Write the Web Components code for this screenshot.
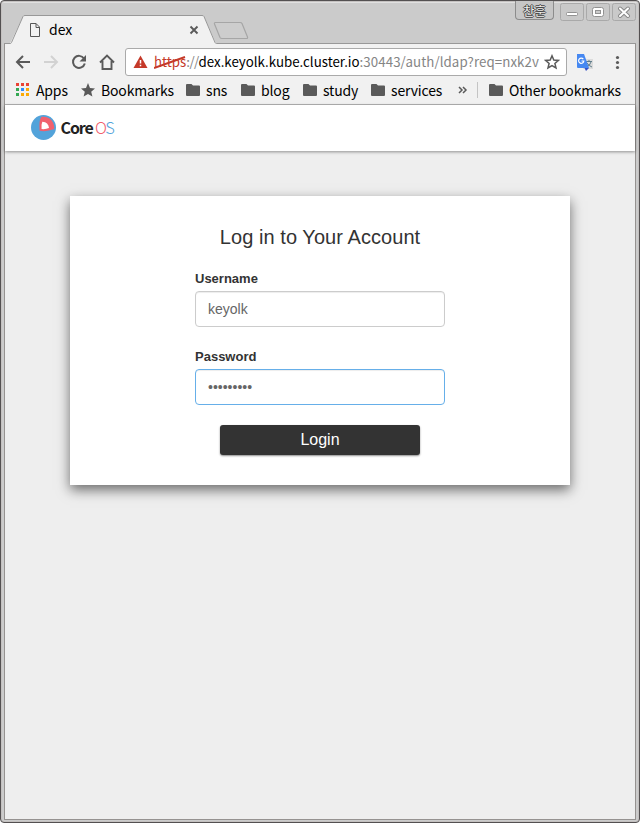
<!DOCTYPE html>
<html lang="en">
<head>
<meta charset="utf-8">
<title>dex</title>
<style>
html,body{margin:0;height:100%;overflow:hidden;background:#fff}
</style>
</head>
<body>
<browser-window>
  <title-bar slot="title">dex</title-bar>
  <nav-bar slot="nav"></nav-bar>
  <bookmark-bar slot="bookmarks"></bookmark-bar>
  <login-page></login-page>
</browser-window>
<script>
const define = (name, html) => customElements.define(name, class extends HTMLElement {
  constructor() {
    super();
    this.attachShadow({mode: 'open'}).innerHTML = '<style>:host,*{box-sizing:border-box}svg{display:block;flex:none}</style>' + html;
  }
});

define('browser-window', `
<style>
:host{display:flex;flex-direction:column;width:640px;height:823px;background:#cbcbcb;border:1px solid #535051;border-radius:4px;box-shadow:inset 0 0 0 1px #c4c1c0,inset 0 2px 0 #e0e0e0;padding:0 3px 2px;font-family:"Noto Sans CJK KR","Noto Sans",sans-serif;color:#000}
.body{flex:1;display:flex;flex-direction:column;border:solid #959290;border-width:0 1px 1px;background:#f1f1f1;min-height:0}
</style>
<slot name="title"></slot>
<div class="body"><slot name="nav"></slot><slot name="bookmarks"></slot><slot></slot></div>`);

define('title-bar', `
<style>
:host{display:block;height:43px;position:relative;flex:none}
.shape{position:absolute;left:0;top:0}
.tab{display:flex;align-items:center;height:28px;width:202px;padding:0 7px 0 25px;position:absolute;top:14px;left:0;font-size:14px}
.label{flex:1;padding-left:8px}
.controls{display:flex;position:absolute;right:0;top:0}
.ime{width:39px;height:19px;border:1px solid #8c8c8c;border-top:0;border-radius:0 0 4px 4px;background:#c6c6c6;font-size:12.500px;line-height:20px;text-align:center;color:#eee;text-shadow:1px 0 #444,-1px 0 #444,0 1px #444,0 -1px #444;margin-right:6px}
</style>
<svg class="shape" width="632" height="43" viewBox="4 1 632 43">
<path d="M4 43.5H10L23 16.500Q23.500 15.500 25 15.500H202Q203.500 15.500 204 16.500L216 43.500H636V44H4Z" fill="#f1f1f1"/>
<path d="M4 43.500H10.500Q11 43.500 11.500 42.500L23 16.500Q23.500 15.500 25 15.500H202Q203.500 15.500 204 16.500L215 42.500Q215.500 43.500 216.500 43.500H636" fill="none" stroke="#989898"/>
<path d="M215.500 22.500H240Q241.500 22.500 242 23.500L247.500 37Q248 38.500 246.500 38.500H222Q220.500 38.500 220 37.500L214.500 24Q214 22.500 215.500 22.500Z" fill="#cdcdcd" stroke="#a6a6a6" stroke-width="1.200"/>
</svg>
<div class="tab"><svg style="margin-top:2px" width="12" height="14" viewBox="0 0 12 14"><path d="M1.500.5H7L10.500 4V13.500H1.500ZM7 .5V4.500H10.500" fill="none" stroke="#555"/></svg><span class="label"><slot></slot></span><svg style="margin-top:2px" width="10" height="10"><path d="M1.500 1.500L8.500 8.500M8.500 1.500L1.500 8.500" stroke="#5a5a5a" stroke-width="1.900"/></svg></div>
<div class="controls"><div class="ime">찬훈</div>
<svg width="76" height="22" viewBox="560 1 76 22">
<g fill="#c9c9c9" stroke="#a9a9a9"><rect x="560.500" y="3.500" width="23" height="17" rx="2"/><rect x="586.500" y="3.500" width="23" height="17" rx="2"/><rect x="612.500" y="3.500" width="23" height="17" rx="2"/></g>
<rect x="566.500" y="12.500" width="11" height="3" rx="1" fill="#fff" stroke="#929292"/>
<rect x="592.500" y="7.500" width="11" height="9" rx="2" fill="#fff" stroke="#929292"/><rect x="595.500" y="10.500" width="5" height="3" fill="#ccc" stroke="#929292"/>
<path d="M620 8.500L628 16M628 8.500L620 16" stroke="#888" stroke-width="4" stroke-linecap="round"/><path d="M620 8.500L628 16M628 8.500L620 16" stroke="#fff" stroke-width="2" stroke-linecap="round"/>
</svg></div>`);

define('nav-bar', `
<style>
:host{display:flex;align-items:center;height:36px;flex:none;padding:0 0 0 10px;background:#f1f1f1}
.icons{display:flex;width:110px;flex:none}
.url{width:442px;height:28px;border:1px solid #aaa;border-radius:3px;background:#fff;display:flex;align-items:center;padding:0 6px 0 7px;flex:none}
.text{width:388px;margin-left:6px;white-space:nowrap;font-size:13.300px;line-height:24px;color:#858585;height:24px}
.bad{color:#c53929;position:relative;display:inline-block}.bad svg{position:absolute;left:0;top:6px}
.slashes{letter-spacing:-.6px}
.host{color:#000}
.path{letter-spacing:.07px}
.star{margin-left:2px}
.tr{margin-left:9px}
</style>
<div class="icons"><svg width="110" height="36" viewBox="15 44 110 36" fill="none" stroke="#5a5a5a" stroke-width="2">
<path d="M30 62H17.500M23 56L17 62L23 68"/>
<path d="M44 62H56.500M51 56L57 62L51 68" stroke="#d2d2d2"/>
<path d="M84 58.500A6 6 0 1 0 84.800 63.500"/><path d="M86 55V61.500H79.500Z" fill="#5a5a5a" stroke="none"/>
<path d="M100 62.500L107 55.500L114 62.500M102.500 61V69H111.500V61" stroke-width="1.900"/></svg></div>
<div class="url"><svg width="15" height="14" viewBox="0 0 15 14"><path d="M7.500.5L14.500 13H.5Z" fill="#c53929"/><path d="M7.500 5V8.500M7.500 9.700V11.300" stroke="#fff" stroke-width="1.500"/></svg>
<div class="text"><span class="bad">https<svg width="32" height="14"><path d="M0 12L31 1" stroke="#c53929" stroke-width="2"/></svg></span><span class="slashes">://</span><span class="host">dex.keyolk.kube.cluster.io</span><span class="path">:30443/auth/ldap?req=nxk2v</span></div>
<svg class="star" width="16" height="16" viewBox="0 0 16 16"><path d="M8 1.800L9.800 6L14.300 6.400L10.900 9.400L12 13.900L8 11.500L4 13.900L5.100 9.400L1.700 6.400L6.200 6Z" fill="none" stroke="#5a5a5a" stroke-width="1.500"/></svg></div>
<svg class="tr" width="18" height="17" viewBox="576 54 18 17"><rect x="583" y="59" width="10" height="10" fill="#dcdcdc"/><path d="M586 61.500H592M589 60V62M591 62Q590 66 586 67M587 63Q589 66 592 67" stroke="#607d8b" fill="none"/><path d="M577 54H584L589 68H578Q577 68 577 67Z" fill="#4688f1"/><path d="M584.500 68H589L586 71Z" fill="#3752c8"/><path d="M583.300 59.200A2.600 2.600 0 1 0 583.800 61H581.500" fill="none" stroke="#fff" stroke-width="1.200"/></svg>
<svg style="margin-left:20px" width="8" height="16"><g fill="#5a5a5a"><circle cx="3.500" cy="3.500" r="1.600"/><circle cx="3.500" cy="8.500" r="1.600"/><circle cx="3.500" cy="13.500" r="1.600"/></g></svg>`);

define('bookmark-item', `
<style>
:host{display:flex;align-items:center;flex:none;font-size:14px;line-height:20px;white-space:nowrap;letter-spacing:-.16px}
.i{width:20px;flex:none}
.t{margin-top:-1px}
</style><span class="i"><slot name="icon"><svg width="15" height="14"><path d="M0 2Q0 1 1 1H5.500L7 2.500H13Q14 2.500 14 3.500V12Q14 13 13 13H1Q0 13 0 12Z" fill="#5a5a5a"/></svg></slot></span><span class="t"><slot></slot></span>`);

define('bookmark-bar', `
<style>
:host{display:flex;align-items:center;height:25px;flex:none;padding:0 0 4px 11px;border-bottom:1px solid #b4b4b4;background:#f1f1f1}
.more{width:19px}.line{width:12px}.line:before{content:"";display:block;width:1px;height:16px;background:#c4c4c4}
</style>
<bookmark-item style="width:65px"><svg slot="icon" width="14" height="14"><g fill="#ea4335"><path d="M0 0h3v3H0zM5 0h3v3H5zM10 0h3v3h-3z"/></g><path d="M0 5h3v3H0zM0 10h3v3H0z" fill="#34a853"/><path d="M5 5h3v3H5z" fill="#2d8cff"/><path d="M10 5h3v3h-3zM5 10h3v3H5zM10 10h3v3h-3z" fill="#fbaa05"/></svg>Apps</bookmark-item>
<bookmark-item style="width:105px"><svg slot="icon" width="14" height="14"><path d="M7 0L9 5L14 5.400L10.200 8.700L11.400 13.500L7 10.900L2.600 13.500L3.800 8.700L0 5.400L5 5Z" fill="#5a5a5a"/></svg>Bookmarks</bookmark-item>
<bookmark-item style="width:55px">sns</bookmark-item>
<bookmark-item style="width:62px">blog</bookmark-item>
<bookmark-item style="width:68px">study</bookmark-item>
<bookmark-item style="width:87px">services</bookmark-item>
<div class="more"><svg width="10" height="8"><path d="M1 1L4 4L1 7M5 1L8 4L5 7" fill="none" stroke="#5a5a5a" stroke-width="1.500"/></svg></div><div class="line"></div>
<bookmark-item>Other bookmarks</bookmark-item>`);

define('form-field', `
<style>
:host{display:block;width:250px;height:78px;font-size:13px;color:#333}
b{display:block;line-height:16px;height:20px}
.box{height:36px;border:1px solid var(--edge,#ccc);border-radius:4px;padding:0 12px;line-height:34px;font-size:14px;color:#666;box-shadow:inset 0 1px 1px rgba(0,0,0,.075);background:#fff}
</style><b><slot name="label"></slot></b><div class="box"><slot></slot></div>`);

define('login-page', `
<style>
:host{display:flex;flex-direction:column;align-items:center;flex:1;background:#eee;font-family:"Liberation Sans",Arial,sans-serif;color:#333}
header{align-self:stretch;height:46px;flex:none;background:#fff;box-shadow:0 1px 3px rgba(0,0,0,.4);display:flex;align-items:center;padding:0 0 1px 26px}
.logo{display:flex;align-items:center;font-family:"Noto Sans CJK KR",sans-serif;color:#222}
.core{margin:-2px 0 0 4.500px;letter-spacing:-1.100px;width:34.500px;font-size:16px;line-height:20px;font-weight:700}
.os{margin-top:-2px;font-weight:300;font-size:16.500px;line-height:20px;display:flex;letter-spacing:-1.800px}
main{width:500px;height:289px;margin-top:45px;background:#fff;box-shadow:0 5px 12px rgba(0,0,0,.55);display:flex;flex-direction:column;align-items:center;padding-top:28px}
h1{margin:0;font-size:20px;font-weight:400;line-height:26px;height:47px;letter-spacing:.06px}
button{width:200px;height:30px;margin-top:-2px;border:0;border-radius:3px;background:#333;color:#fff;font:16px/30px "Liberation Sans",Arial,sans-serif;padding:0;box-shadow:0 1px 2px rgba(0,0,0,.45)}
</style>
<header><div class="logo"><svg width="25" height="25" viewBox="0 0 25 25"><circle cx="12.500" cy="12.500" r="12.500" fill="#53a3da"/><path d="M10.500 1.800C18.500 .8 23.300 6 23.300 14Q16 17 8.600 15.800Q7.800 5 10.500 1.800Z" fill="#f1606d"/><path d="M11.300 6.700Q17.500 7 18 13Q14.500 14.500 10.600 14Q10 10 11.300 6.700Z" fill="#fff"/></svg>
<span class="core">Core</span><span class="os"><span style="color:#f1606d">O</span><span style="color:#53a3da">S</span></span></div></header>
<main><h1>Log in to Your Account</h1>
<form-field><span slot="label">Username</span>keyolk</form-field>
<form-field style="--edge:#66afe9"><span slot="label">Password</span>•••••••••</form-field>
<button>Login</button></main>`);
</script>
</body>
</html>
